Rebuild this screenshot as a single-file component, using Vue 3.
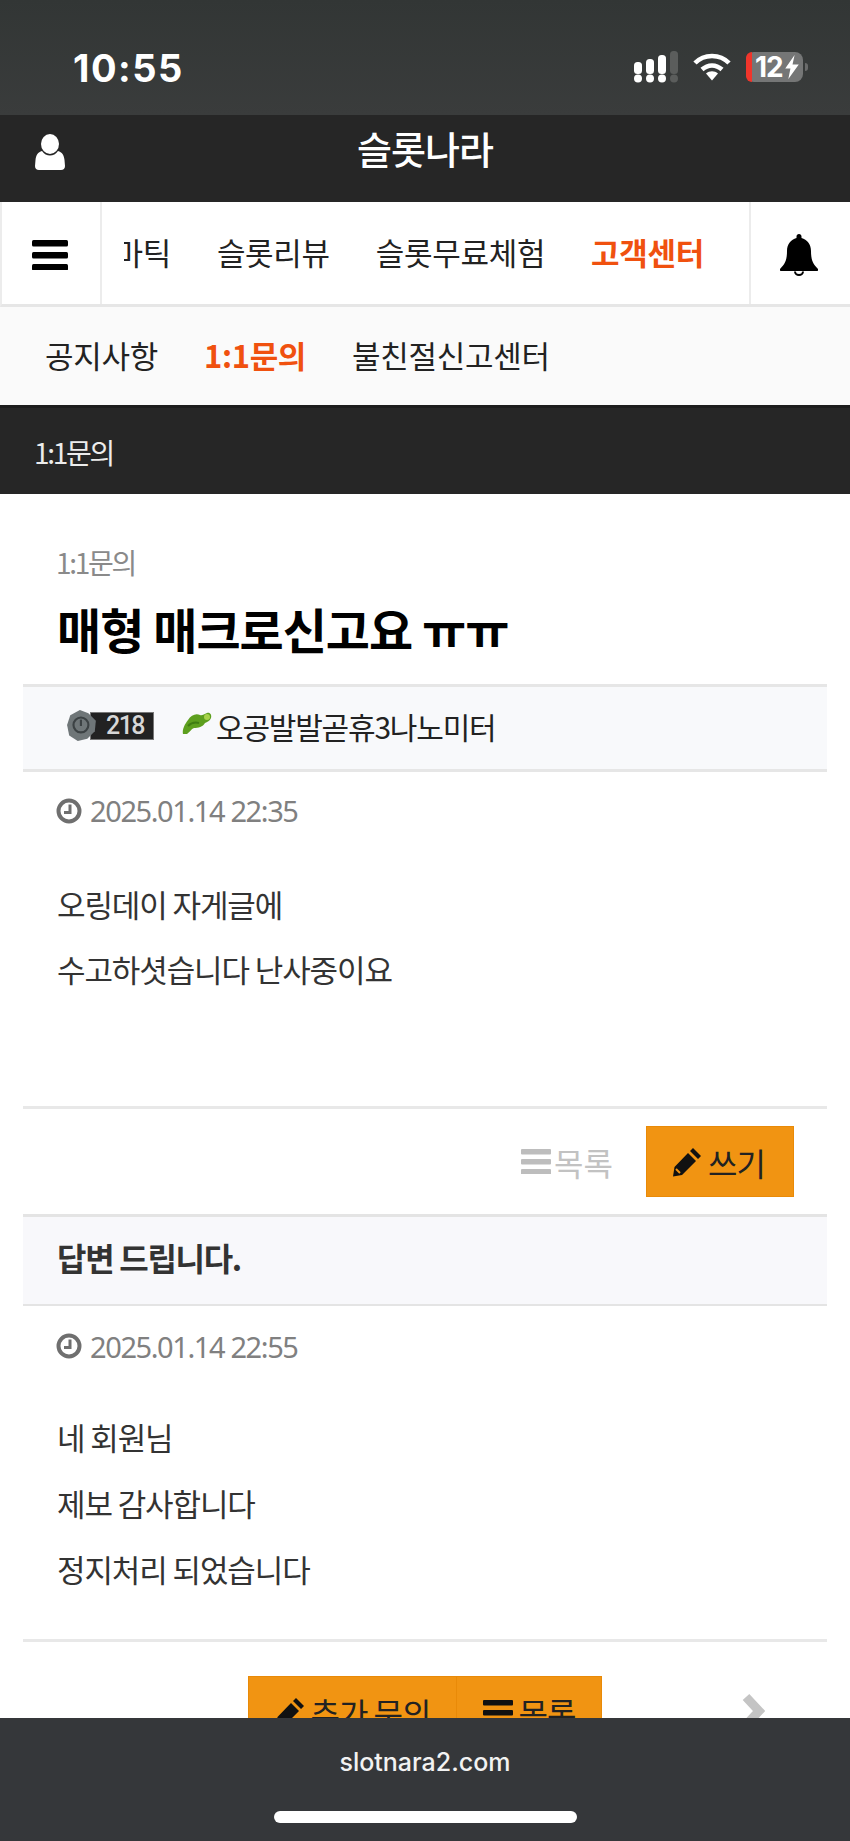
<template>
  <div class="page">
    <div class="status">
      <span class="time">10:55</span>
      <div class="status-icons">
        <svg width="44" height="32" viewBox="0 0 44 32">
          <g fill="#fff">
            <rect x="0" y="11" width="8" height="12" rx="3.500" />
            <rect x="12" y="8" width="8" height="15" rx="3.500" />
            <rect x="24" y="4" width="8" height="19" rx="3.500" />
            <circle cx="4" cy="27.500" r="4" />
            <circle cx="16" cy="27.500" r="4" />
            <circle cx="28" cy="27.500" r="4" />
          </g>
          <rect x="36" y="0" width="8" height="23" rx="3.500" fill="#5b5d5c" />
          <circle cx="40" cy="27.500" r="4" fill="#5b5d5c" />
        </svg>
        <svg class="wifi" width="38" height="28" viewBox="0 0 38 28">
          <path d="M2 10C11 .5 27 .5 36 10" fill="none" stroke="#fff" stroke-width="4.500" />
          <path d="M9 16.500c6-5.500 14-5.500 20 0" fill="none" stroke="#fff" stroke-width="4.500" />
          <path d="M13 20.500c3.500-3 8.500-3 12 0l-6 7z" fill="#fff" />
        </svg>
        <div class="battery">
          <span class="low"></span>
          <span class="level">12</span>
          <svg width="14" height="24" viewBox="0 0 13 23"><path d="M9 0L0 13h5l-2 10 10-14H7z" fill="#fff" /></svg>
          <span class="nub"></span>
        </div>
      </div>
    </div>

    <header class="top">
      <svg class="user" width="30" height="36" viewBox="0 0 30 36">
        <ellipse cx="15" cy="10" rx="9" ry="10" fill="#fff" />
        <path d="M7 17c2 3 5 4.500 8 4.500s6-1.500 8-4.500c4 1 6 4 6.500 9l.5 6c0 2.500-1.500 4-4 4H4c-2.500 0-4-1.500-4-4l.5-6C1 21 3 18 7 17z" fill="#fff" />
      </svg>
      <h1>슬롯나라</h1>
    </header>

    <nav class="nav">
      <div class="nav-btn left">
        <svg width="36" height="30" viewBox="0 0 36 30">
          <g fill="#000">
            <rect y="0" width="36" height="6.500" rx="1.500" />
            <rect y="12" width="36" height="6.500" rx="1.500" />
            <rect y="24" width="36" height="6.500" rx="1.500" />
          </g>
        </svg>
      </div>
      <div class="nav-scroll">
        <a v-for="item in navItems" :key="item" :class="{ on: item === '고객센터' }">{{ item }}</a>
      </div>
      <div class="nav-btn right">
        <svg width="38" height="42" viewBox="0 0 38 42">
          <path d="M19 0c1.500 0 2.500 1 2.500 2.500V4C27 5.500 31 10 31 17c0 9 2 13 7 18 .500 1 0 2-1.500 2h-35C0 37-.5 36 0 35c5-5 7-9 7-18C7 10 11 5.500 16.500 4V2.500C16.500 1 17.500 0 19 0z" fill="#000" />
          <path d="M14 37.500a5 4.500 0 0 0 10 0h-2a3 2.500 0 0 1-6 0z" fill="#000" />
        </svg>
      </div>
    </nav>

    <div class="subnav">
      <a v-for="item in subItems" :key="item" :class="{ on: item === '1:1문의' }">{{ item }}</a>
    </div>

    <div class="board-title">1:1문의</div>

    <main class="view">
      <div class="head">
        <div class="cate">1:1문의</div>
        <h2>매형 매크로신고요 ㅠㅠ</h2>
      </div>

      <div class="author">
        <div class="badge">
          <svg width="32" height="32" viewBox="0 0 28 30">
            <path d="M12 0l8 3 7 7-1 10-7 7-9 2-8-5-2-10 3-9z" fill="#6f7678" />
            <circle cx="13" cy="14" r="7" fill="none" stroke="#3c4244" stroke-width="2" />
            <path d="M13 9v6" stroke="#3c4244" stroke-width="2" />
          </svg>
          <span>218</span>
        </div>
        <svg class="leaf" width="30" height="23" viewBox="0 0 30 23">
          <path d="M1 22C0 17 3 12 6 8 9 3 14 1 18 3c2 1 4-1 7-2 3-1 5 2 4 5-1 3-4 4-6 5-2 4-7 5-11 5-3 1-4 4-7 6z" fill="#5d9f1e" />
          <circle cx="25" cy="5" r="3" fill="#a7d24a" />
          <path d="M6 14c3-3 7-4 11-3" stroke="#3f7d12" stroke-width="2" fill="none" />
        </svg>
        <span class="nick">오공발발곧휴3나노미터</span>
      </div>

      <div class="date first">
        <svg width="26" height="26" viewBox="0 0 26 26">
          <circle cx="13" cy="13" r="10.500" fill="none" stroke="#6f6f6f" stroke-width="4" />
          <path d="M14 6.500v8H8" fill="none" stroke="#6f6f6f" stroke-width="3" />
        </svg>
        <span>2025.01.14 22:35</span>
      </div>

      <div class="content question">
        <p>오링데이 자게글에</p>
        <p>수고하셧습니다 난사중이요</p>
      </div>

      <div class="actions">
        <a class="list-link">
          <svg width="30" height="25" viewBox="0 0 30 25">
            <g fill="#bdbdbd">
              <rect y="0" width="30" height="5.500" rx="1" />
              <rect y="10" width="30" height="5.500" rx="1" />
              <rect y="20" width="30" height="5.500" rx="1" />
            </g>
          </svg>
          목록
        </a>
        <a class="btn write">
          <svg width="30" height="30" viewBox="0 0 30 30">
            <path d="M21 1l8 8-3 3-8-8zM16 6l8 8-14 14-9 1.500L2.500 20z" fill="#111" />
            <path d="M4 22l4 4" stroke="#f19412" stroke-width="2" />
          </svg>
          쓰기
        </a>
      </div>

      <div class="reply-head">답변 드립니다.</div>

      <div class="date">
        <svg width="26" height="26" viewBox="0 0 26 26">
          <circle cx="13" cy="13" r="10.500" fill="none" stroke="#6f6f6f" stroke-width="4" />
          <path d="M14 6.500v8H8" fill="none" stroke="#6f6f6f" stroke-width="3" />
        </svg>
        <span>2025.01.14 22:55</span>
      </div>

      <div class="content answer">
        <p>네 회원님</p>
        <p>제보 감사합니다</p>
        <p>정지처리 되었습니다</p>
      </div>

      <div class="foot-actions">
        <div class="btn-group">
          <a class="btn more">
            <svg width="30" height="30" viewBox="0 0 30 30">
              <path d="M21 1l8 8-3 3-8-8zM16 6l8 8-14 14-9 1.500L2.500 20z" fill="#111" />
            </svg>
            추가 문의
          </a>
          <a class="btn list">
            <svg width="30" height="25" viewBox="0 0 30 25">
              <g fill="#111">
                <rect y="0" width="30" height="5.500" rx="1" />
                <rect y="10" width="30" height="5.500" rx="1" />
                <rect y="20" width="30" height="5.500" rx="1" />
              </g>
            </svg>
            목록
          </a>
        </div>
        <svg class="next" width="24" height="36" viewBox="0 0 24 36">
          <path d="M5 4l13 14L5 32" fill="none" stroke="#c4c4c4" stroke-width="9" />
        </svg>
      </div>
    </main>

    <div class="browser-bar">
      <span class="url">slotnara2.com</span>
      <span class="home"></span>
    </div>
  </div>
</template>

<script setup>
const navItems = ['슬롯마틱', '슬롯리뷰', '슬롯무료체험', '고객센터']
const subItems = ['공지사항', '1:1문의', '불친절신고센터']
</script>

<style scoped>
.page {
  position: relative;
  width: 850px;
  height: 1841px;
  overflow: hidden;
  background: #fff;
  font-family: "Noto Sans CJK KR", "Noto Sans", sans-serif;
  color: #222;
}
a { display: block; }
p { margin: 0; }
h1, h2 { margin: 0; }

.status {
  height: 115px;
  box-sizing: border-box;
  background: linear-gradient(#323635, #3a3c3c);
  display: flex;
  justify-content: space-between;
  padding: 46px 47px 0 73px;
}
.time {
  font-family: Inter, sans-serif;
  font-weight: 700;
  font-size: 38px;
  line-height: 44px;
  letter-spacing: 1.5px;
  color: #fff;
}
.status-icons { display: flex; align-items: flex-start; gap: 15px; padding-top: 5px; }
.wifi { margin-top: 2px; }
.battery {
  position: relative;
  display: flex;
  align-items: center;
  width: 57px;
  height: 30px;
  margin-top: 1px;
  box-sizing: border-box;
  padding-left: 9px;
  background: #757676;
  border-radius: 8px;
}
.low {
  position: absolute;
  left: 0;
  top: 0;
  bottom: 0;
  width: 6px;
  background: #f0352b;
  border-radius: 8px 0 0 8px;
}
.level {
  font-family: Inter, sans-serif;
  font-weight: 700;
  font-size: 28px;
  line-height: 30px;
  letter-spacing: -1px;
  color: #fff;
  margin-right: 2px;
}
.nub {
  position: absolute;
  right: -5px;
  top: 11px;
  width: 3px;
  height: 8px;
  background: #6a6b6b;
  border-radius: 0 3px 3px 0;
}

.top {
  position: relative;
  height: 87px;
  background: #262626;
  text-align: center;
}
.user { position: absolute; left: 35px; top: 19px; }
.top h1 {
  font-size: 38px;
  font-weight: 500;
  line-height: 66px;
  color: #fff;
  letter-spacing: -1px;
}

.nav {
  display: flex;
  height: 105px;
  box-sizing: border-box;
  background: #fff;
  border-left: 2px solid #ececec;
  border-bottom: 3px solid #e6e6e6;
}
.nav-btn {
  flex: none;
  display: flex;
  justify-content: center;
  box-sizing: border-box;
}
.nav-btn.left { width: 100px; border-right: 2px solid #ececec; padding-top: 38px; }
.nav-btn.left svg { margin-left: -2px; }
.nav-btn.right { width: 101px; border-left: 2px solid #ececec; padding-top: 32px; }
.nav-btn.right svg { margin-right: 3px; }
.nav-scroll {
  flex: 1;
  min-width: 0;
  margin-left: 22px;
  overflow: hidden;
  display: flex;
  justify-content: flex-end;
  gap: 46px;
  padding-right: 45px;
}
.nav-scroll a {
  flex: none;
  font-size: 31px;
  line-height: 100px;
  color: #222;
  letter-spacing: -0.3px;
}
.nav-scroll a.on { color: #f0510f; font-weight: 700; }

.subnav {
  display: flex;
  gap: 46px;
  height: 101px;
  box-sizing: border-box;
  padding-left: 45px;
  background: #fafafa;
  border-bottom: 3px solid #1d1d1d;
}
.subnav a {
  font-size: 31px;
  line-height: 96px;
  color: #222;
  letter-spacing: -0.3px;
}
.subnav a.on { color: #f0510f; font-weight: 700; }

.board-title {
  height: 86px;
  box-sizing: border-box;
  padding: 3px 0 0 34px;
  background: #262626;
  color: #ececec;
  font-size: 28px;
  line-height: 82px;
  letter-spacing: -2.300px;
}

.view { padding: 0 23px; }
.head { padding: 46px 34px 0; height: 190px; box-sizing: border-box; }
.cate {
  margin-left: -1px;
  font-size: 28px;
  line-height: 44px;
  color: #8a8a8a;
  letter-spacing: -2.300px;
}
.head h2 {
  margin-top: 12px;
  font-size: 48px;
  font-weight: 700;
  line-height: 64px;
  color: #000;
  letter-spacing: -1px;
}

.author {
  display: flex;
  align-items: center;
  height: 88px;
  box-sizing: border-box;
  padding: 0 0 4px 43px;
  background: #f8f9fb;
  border-top: 3px solid #e6e6e6;
  border-bottom: 3px solid #e6e6e6;
}
.badge { display: flex; align-items: center; width: 88px; margin-right: 28px; }
.badge svg { flex: none; margin-right: -8px; position: relative; z-index: 1; }
.badge span {
  flex: 1;
  height: 28px;
  box-sizing: border-box;
  padding-left: 6px;
  background: #222;
  border: 1px solid #777;
  color: #d7d7d7;
  font-family: Roboto, sans-serif;
  font-size: 25px;
  font-weight: 500;
  line-height: 26px;
  letter-spacing: -1.5px;
  text-align: center;
}
.leaf { margin-right: 4px; margin-top: -6px; }
.nick {
  font-size: 30px;
  line-height: 44px;
  color: #222;
  letter-spacing: -1.2px;
}

.date {
  display: flex;
  align-items: center;
  gap: 8px;
  height: 80px;
  box-sizing: border-box;
  padding-left: 33px;
  color: #808080;
  font-family: "Noto Sans", sans-serif;
  font-size: 29px;
  letter-spacing: -1.400px;
}
.date.first { padding-bottom: 3px; }

.content { padding-left: 34px; font-size: 31px; line-height: 66px; letter-spacing: -1.1px; color: #333; box-sizing: border-box; }
.question { height: 254px; padding-top: 19px; line-height: 65px; }
.answer { height: 253px; padding-top: 18px; }

.actions {
  display: flex;
  justify-content: flex-end;
  align-items: center;
  height: 108px;
  box-sizing: border-box;
  padding-right: 33px;
  border-top: 3px solid #e8e8e8;
}
.list-link {
  display: flex;
  align-items: center;
  gap: 3px;
  margin-right: 33px;
  font-size: 32px;
  color: #c2c2c2;
}
.btn {
  display: flex;
  align-items: center;
  justify-content: center;
  gap: 6px;
  box-sizing: border-box;
  background: #f19412;
  border: 1px solid #e98a08;
  color: #222;
  font-size: 32px;
  letter-spacing: -1px;
}
.write { width: 148px; height: 71px; padding-right: 3px; }

.reply-head {
  height: 92px;
  box-sizing: border-box;
  padding-left: 34px;
  background: #f8f8fb;
  border-top: 3px solid #e4e4e4;
  border-bottom: 2px solid #e4e4e4;
  font-size: 32px;
  font-weight: 700;
  line-height: 80px;
  color: #333;
  letter-spacing: -1.3px;
}

.foot-actions {
  position: relative;
  display: flex;
  justify-content: center;
  height: 120px;
  padding-top: 34px;
  box-sizing: border-box;
  border-top: 3px solid #e8e8e8;
}
.btn-group { display: flex; height: 72px; }
.btn.more { width: 209px; }
.btn.list { width: 146px; margin-left: -1px; }
.next { position: absolute; right: 62px; top: 51px; }

.browser-bar {
  position: absolute;
  left: 0;
  right: 0;
  bottom: 0;
  height: 123px;
  background: #35373a;
  text-align: center;
}
.url {
  display: block;
  margin-top: 27px;
  font-family: Inter, sans-serif;
  font-size: 25px;
  font-weight: 500;
  line-height: 34px;
  color: #f2f2f2;
}
.home {
  position: absolute;
  left: 274px;
  bottom: 18px;
  width: 303px;
  height: 12px;
  border-radius: 6px;
  background: #fff;
}
</style>
